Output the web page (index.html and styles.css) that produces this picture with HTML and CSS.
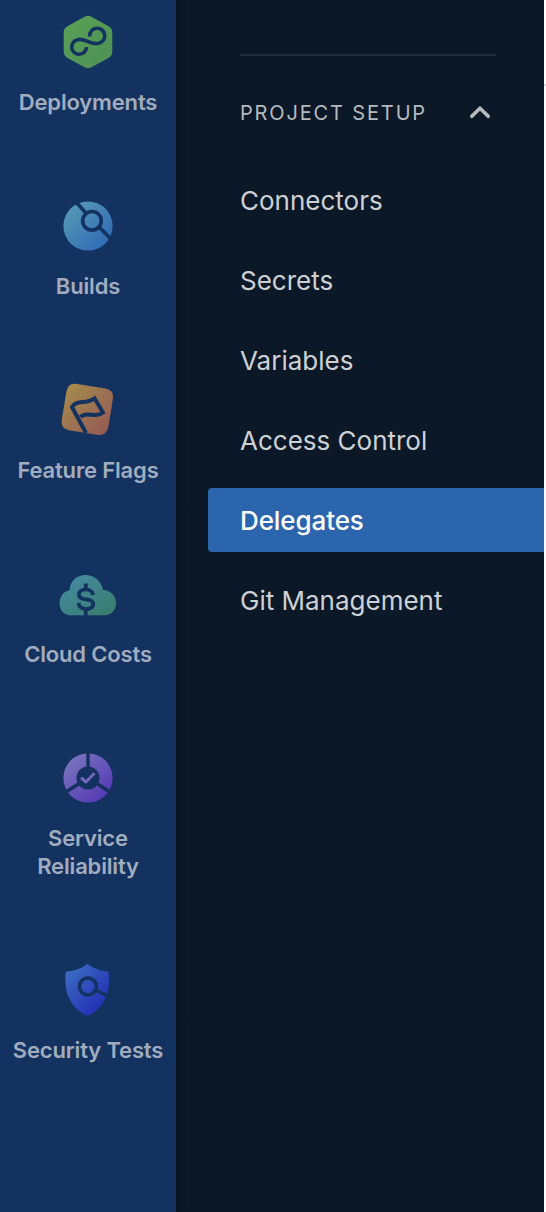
FILE: index.html
```
<!DOCTYPE html>
<html lang="en">
<head>
<meta charset="utf-8">
<title>Delegates</title>
<link rel="stylesheet" href="styles.css">
</head>
<body>
<div class="app">
  <nav class="modules">
    <a class="module">
      <svg class="module-icon" viewBox="0 0 80 76">
        <defs><linearGradient id="g1" x1="0" y1="0" x2="1" y2="1"><stop offset="0" stop-color="#5aa056"/><stop offset="1" stop-color="#4c9155"/></linearGradient></defs>
        <path fill="url(#g1)" d="M36.500 12.700Q40 10.700 43.500 12.700L60.500 22.200Q64.300 24.300 64.300 28.500V47.500Q64.300 51.700 60.500 53.900L43.500 63.300Q40 65.300 36.500 63.300L19.500 53.900Q15.700 51.700 15.700 47.500V28.500Q15.700 24.300 19.500 22.200Z"/>
        <path class="cut thick" d="M41.600 32.500A7.600 7.600 0 1 1 50.500 39.300C42 41.500 37 33.500 29.500 35.700A7.400 7.400 0 1 0 38.500 43"/>
      </svg>
      <span class="module-label">Deployments</span>
    </a>
    <a class="module">
      <svg class="module-icon" viewBox="0 -2 80 76">
        <defs><linearGradient id="g2" x1=".1" y1=".1" x2=".85" y2=".9"><stop offset="0" stop-color="#5699b4"/><stop offset="1" stop-color="#306bb7"/></linearGradient></defs>
        <circle cx="40" cy="36" r="24.600" fill="url(#g2)"/>
        <path class="cut thick" d="M27 11L37.500 22.500M51 37L63 49"/>
        <circle class="cut thick" cx="44" cy="30.800" r="9.300"/>
      </svg>
      <span class="module-label">Builds</span>
    </a>
    <a class="module">
      <svg class="module-icon" viewBox="0 2 80 76">
        <defs><linearGradient id="g3" x1=".1" y1=".1" x2=".9" y2=".9"><stop offset="0" stop-color="#a58a4c"/><stop offset="1" stop-color="#955b54"/></linearGradient></defs>
        <path fill="url(#g3)" d="M27.500 13.800L57.500 18.500Q66 20 65 28L60.500 56.500Q58.500 66 50 65L21 60.300Q12.500 58.500 13.700 50.500L18.300 22Q20 13 27.500 13.800Z"/>
        <path class="cut flag" d="M38 63L24 37C29 29 37 35 46.500 28.300L55 42.500C47 49 39 40.500 32.500 47"/>
      </svg>
      <span class="module-label">Feature Flags</span>
    </a>
    <a class="module">
      <svg class="module-icon" viewBox="0 -4.5 80 76">
        <defs><linearGradient id="g4" x1=".1" y1=".1" x2=".85" y2=".95"><stop offset="0" stop-color="#448aa0"/><stop offset="1" stop-color="#397e70"/></linearGradient></defs>
        <path fill="url(#g4)" d="M22 54.800C8 54 8.500 32 21.500 29.800C22.500 10 51 9 55 29.500C71.500 30 72.500 53.500 57.500 54.800Z"/>
        <path class="cut dollar" d="M37.800 23V29M37.800 48V56M45 34.500C44 26.800 31 27.500 31 34.200C31 41.500 45.200 36.500 45.200 43.500C45.200 50.500 31.200 50.500 30.500 42.500"/>
      </svg>
      <span class="module-label">Cloud Costs</span>
    </a>
    <a class="module">
      <svg class="module-icon" viewBox="0 0 80 76">
        <defs><linearGradient id="g5" x1=".1" y1=".1" x2=".8" y2=".9"><stop offset="0" stop-color="#7974be"/><stop offset="1" stop-color="#563bb5"/></linearGradient></defs>
        <circle cx="40" cy="38" r="24.600" fill="url(#g5)"/>
        <path class="cut spoke" d="M40 12V30M32 43L18 52M48 43L62 52"/>
        <circle cx="40" cy="38" r="11.500" fill="#14325f"/>
        <path class="tick" d="M34 38.500L38 42L45.700 34"/>
      </svg>
      <span class="module-label">Service<br>Reliability</span>
    </a>
    <a class="module">
      <svg class="module-icon" viewBox="0 2 80 76">
        <defs><linearGradient id="g6" x1=".1" y1=".1" x2=".75" y2=".85"><stop offset="0" stop-color="#3b6cc0"/><stop offset="1" stop-color="#2431b6"/></linearGradient></defs>
        <path fill="url(#g6)" d="M39.500 13.700C44 18 53 21 59.500 21.500Q61 22 61 24V32C61 48 52 60.500 39.500 66C27 60.500 17.500 48 17.500 32V24Q17.500 22 19 21.500C26 21 35 18 39.500 13.700Z"/>
        <circle class="cut scan" cx="40" cy="36.500" r="8.500"/>
        <path class="cut scan" d="M47.500 40L60 46"/>
      </svg>
      <span class="module-label">Security Tests</span>
    </a>
  </nav>
  <aside class="sidebar">
    <div class="previous"><span class="clipped">Overview</span></div>
    <div class="section-head">
      <span class="section-title">PROJECT SETUP</span>
      <svg class="chevron" viewBox="0 0 24 16"><path d="M3.800 12.300L12 4.200L20.200 12.300"/></svg>
    </div>
    <a class="link">Connectors</a>
    <a class="link">Secrets</a>
    <a class="link">Variables</a>
    <a class="link">Access Control</a>
    <a class="link active">Delegates</a>
    <a class="link">Git Management</a>
  </aside>
  <main class="content"></main>
</div>
</body>
</html>
```
FILE: styles.css
```
* { box-sizing: border-box; }
body {
  margin: 0;
  font-family: Inter, "Liberation Sans", sans-serif;
  background: #0b1828;
}
.app {
  display: grid;
  grid-template-columns: 176px 368px 2px;
  height: 1212px;
  overflow: hidden;
}
.modules {
  display: flex;
  flex-direction: column;
  gap: 72px;
  padding-top: 4px;
  background: #14325f;
}
.module {
  display: flex;
  flex-direction: column;
  align-items: center;
  gap: 8px;
}
.module-icon { width: 80px; height: 76px; }
.module-label {
  font-size: 22px;
  font-weight: 600;
  line-height: 28px;
  letter-spacing: -0.16px;
  text-align: center;
  white-space: nowrap;
  color: #a1adbf;
}
.cut { fill: none; stroke: #14325f; }
.thick { stroke-width: 3.6; }
.flag { stroke-width: 4; }
.dollar { stroke-width: 3.8; }
.spoke { stroke-width: 3.5; }
.scan { stroke-width: 3.6; }
.tick {
  fill: none;
  stroke: #7467bd;
  stroke-width: 3;
  stroke-linecap: round;
  stroke-linejoin: round;
}
.sidebar {
  display: flex;
  flex-direction: column;
  padding-left: 32px;
  background: linear-gradient(90deg, #081421, #0b1828 12px);
}
.previous {
  height: 56px;
  margin: 0 48px 0 32px;
  border-bottom: 2px solid #222e3c;
  overflow: hidden;
}
.clipped {
  display: block;
  height: 32px;
  margin-top: -25px;
  transform: translateY(0.4px);
  font-size: 26px;
  line-height: 32px;
  color: #ced1d4;
}
.section-head {
  display: flex;
  align-items: center;
  justify-content: space-between;
  height: 112px;
  padding: 0 52px 0 32px;
  font-size: 20px;
  letter-spacing: 1.85px;
  color: #b6babf;
}
.section-title { padding-top: 2px; }
.chevron { width: 24px; height: 16px; }
.chevron path {
  fill: none;
  stroke: #b6babf;
  stroke-width: 3.6;
  stroke-linecap: round;
  stroke-linejoin: round;
}
.link {
  height: 64px;
  margin-bottom: 16px;
  padding-left: 32px;
  font-size: 26px;
  line-height: 66px;
  color: #ced1d4;
}
.active {
  color: #fff;
  font-weight: 500;
  letter-spacing: -0.1px;
  background: #2a65ad;
  border-radius: 4px 0 0 4px;
}
.content {
  background: linear-gradient(#fff 84px, #d9dae5 84px, #d9dae5 86px, #fafbfe 86px);
}
```
